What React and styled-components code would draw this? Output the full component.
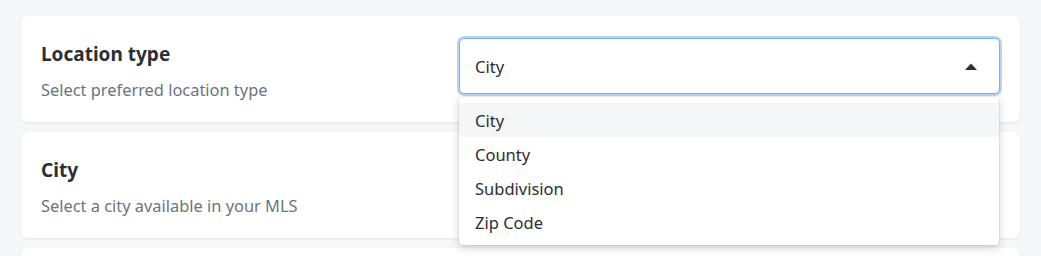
import React from "react";
import styled, { createGlobalStyle } from "styled-components";

const GlobalStyle = createGlobalStyle`
  html, body {
    margin: 0;
    padding: 0;
    background: #f6f7f9;
    font-family: "Noto Sans", "Open Sans", sans-serif;
  }
`;

const Page = styled.div`
  display: flex;
  flex-direction: column;
  gap: 10px;
  padding: 16px 21px;
  height: 256px;
  box-sizing: border-box;
  overflow: hidden;
`;

const Card = styled.div`
  display: flex;
  justify-content: space-between;
  align-items: flex-start;
  flex-shrink: 0;
  min-height: 106px;
  box-sizing: border-box;
  padding: 22px 20px 20px 20px;
  background: #ffffff;
  border-radius: 7px;
  box-shadow: 0 1px 3px rgba(20, 30, 50, 0.08);
  position: relative;
  z-index: ${(p) => p.$z || 1};
`;

const Info = styled.div`
  display: flex;
  flex-direction: column;
  gap: 11px;
  padding-top: 3px;
`;

const Title = styled.div`
  font-size: 19px;
  font-weight: 700;
  line-height: 26px;
  color: #2b2f33;
`;

const Subtitle = styled.div`
  font-size: 16.4px;
  line-height: 24px;
  color: #6b7480;
`;

const SelectWrap = styled.div`
  position: relative;
  width: 541px;
`;

const SelectBox = styled.div`
  display: flex;
  align-items: center;
  justify-content: space-between;
  height: 56px;
  box-sizing: border-box;
  padding: 0 22px 0 15px;
  border: 1px solid #7bb0f2;
  border-radius: 5px;
  background: #fff;
  box-shadow: 0 0 0 2px #b4d4fb;
  font-size: 16.5px;
  color: #2b2f33;
`;

const Menu = styled.ul`
  position: absolute;
  top: calc(100% + 3px);
  left: 0;
  right: 1px;
  margin: 0;
  padding: 6px 0;
  list-style: none;
  background: #fff;
  border-radius: 4px;
  box-shadow: 0 0 0 1px rgba(0, 0, 0, 0.05), 0 3px 8px rgba(0, 0, 0, 0.18);
  z-index: 10;
`;

const Option = styled.li`
  height: 34px;
  display: flex;
  align-items: center;
  padding: 0 16px;
  font-size: 16.5px;
  color: #2b2f33;
  background: ${(p) => (p.$active ? "#f5f6f8" : "transparent")};
`;

const CaretUp = () => (
  <svg width="12" height="7" viewBox="0 0 12 7">
    <path d="M0 7 L6 0.5 L12 7 Z" fill="#2b2f33" />
  </svg>
);

const options = ["City", "County", "Subdivision", "Zip Code"];

const App = () => (
  <>
    <GlobalStyle />
    <Page>
      <Card $z={3}>
        <Info>
          <Title>Location type</Title>
          <Subtitle>Select preferred location type</Subtitle>
        </Info>
        <SelectWrap>
          <SelectBox>
            <span>City</span>
            <CaretUp />
          </SelectBox>
          <Menu>
            {options.map((o, i) => (
              <Option key={o} $active={i === 0}>
                {o}
              </Option>
            ))}
          </Menu>
        </SelectWrap>
      </Card>
      <Card $z={2}>
        <Info>
          <Title>City</Title>
          <Subtitle>Select a city available in your MLS</Subtitle>
        </Info>
      </Card>
      <Card />
    </Page>
  </>
);

export default App;
